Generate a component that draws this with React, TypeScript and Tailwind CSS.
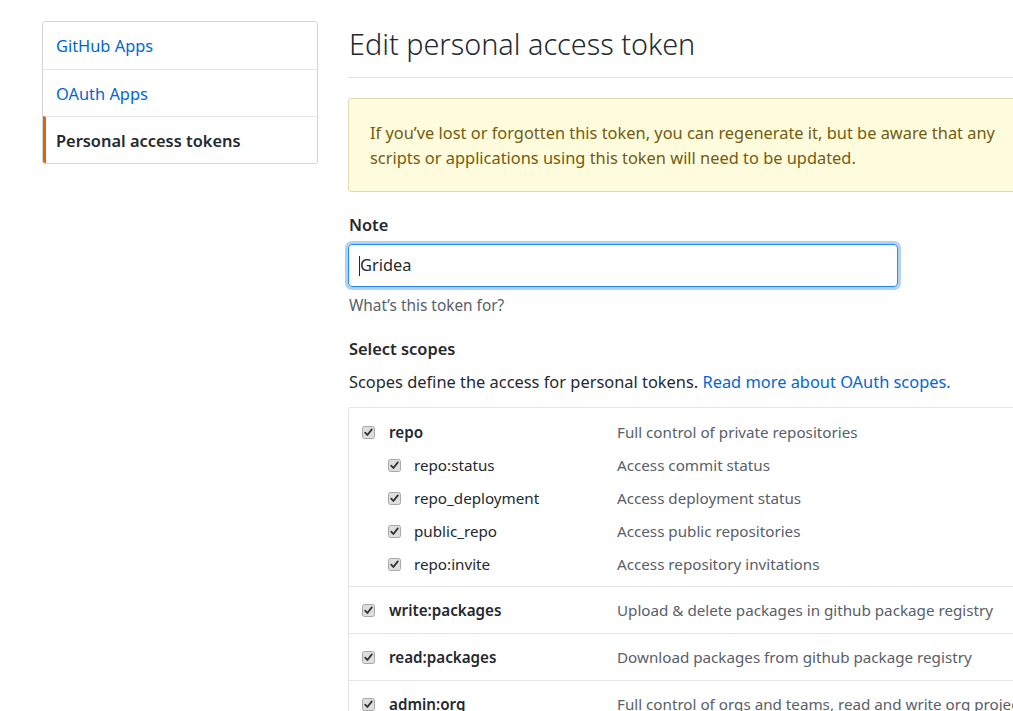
import React from 'react';

const FONT = { fontFamily: '"Noto Sans", "Open Sans", Arial, sans-serif' };

const NAV = [
    { label: 'GitHub Apps', active: false },
    { label: 'OAuth Apps', active: false },
    { label: 'Personal access tokens', active: true },
];

interface Scope {
    name: string;
    desc: string;
    children?: { name: string; desc: string }[];
}

const SCOPES: Scope[] = [
    {
        name: 'repo',
        desc: 'Full control of private repositories',
        children: [
            { name: 'repo:status', desc: 'Access commit status' },
            { name: 'repo_deployment', desc: 'Access deployment status' },
            { name: 'public_repo', desc: 'Access public repositories' },
            { name: 'repo:invite', desc: 'Access repository invitations' },
        ],
    },
    { name: 'write:packages', desc: 'Upload & delete packages in github package registry' },
    { name: 'read:packages', desc: 'Download packages from github package registry' },
    { name: 'admin:org', desc: 'Full control of orgs and teams, read and write org projects' },
];

const Check = () => (
    <svg width="13" height="13" viewBox="0 0 13 13" className="shrink-0">
        <rect x="0.5" y="0.5" width="12" height="12" rx="2" fill="#dedede" stroke="#a8a8a8" />
        <path d="M3.2 6.6 L5.4 9 L9.8 3.4" fill="none" stroke="#333" strokeWidth="1.8" strokeLinecap="round" strokeLinejoin="round" />
    </svg>
);

export default function App() {
    return (
        <div className="w-[1013px] h-[711px] overflow-hidden bg-white flex" style={FONT}>
            {/* Sidebar */}
            <div className="pl-[42px] pt-[21px] w-[348px] shrink-0">
                <nav className="w-[276px] border border-[#d1d5da] rounded-[3px] overflow-hidden">
                    {NAV.map((item, i) => (
                        <div
                            key={item.label}
                            className={`h-[47px] flex items-center pt-[2px] text-[16.4px] ${i > 0 ? 'border-t border-[#e1e4e8]' : ''} ${
                                item.active
                                    ? 'border-l-[3px] border-l-[#e36209] pl-[10px] text-[#24292e] font-semibold'
                                    : 'pl-[13px] text-[#0366d6]'
                            }`}
                        >
                            {item.label}
                        </div>
                    ))}
                </nav>
            </div>

            {/* Main */}
            <div className="w-[740px] shrink-0 pt-[24px]">
                <h2 className="text-[28.8px] font-light text-[#24292e] leading-[40px] pb-[13px] border-b border-[#e1e4e8] pl-px">
                    Edit personal access token
                </h2>

                <div className="mt-[20px] bg-[#fffbdd] border border-[#e0d8b0] rounded-[3px] px-[21px] py-[21px] text-[16.4px] leading-[25px] text-[#735c0f]">
                    If you’ve lost or forgotten this token, you can regenerate it, but be aware that any
                    <br />
                    scripts or applications using this token will need to be updated.
                </div>

                <div className="mt-[21px] pl-px">
                    <div className="text-[16.4px] font-semibold text-[#24292e] leading-[24px]">Note</div>
                    <div className="mt-[7px] w-[550px] h-[43px] -ml-px rounded-[4px] border border-[#2188ff] shadow-[0_0_0_3px_rgba(3,102,214,0.3)] flex items-center px-[10px] text-[16.4px] text-[#24292e]">
                        <span className="w-px h-[20px] bg-[#24292e]" />
                        Gridea
                    </div>
                    <div className="mt-[8px] text-[15.4px] text-[#586069] leading-[22px]">What’s this token for?</div>

                    <div className="mt-[20px] text-[16.4px] font-semibold text-[#24292e] leading-[24px]">Select scopes</div>
                    <div className="mt-[9px] text-[16.4px] text-[#24292e] leading-[24px]">
                        Scopes define the access for personal tokens.{' '}
                        <span className="text-[#0366d6]">Read more about OAuth scopes.</span>
                    </div>
                </div>

                <div className="mt-[13px] border border-[#e1e4e8] rounded-[3px] text-[15.2px]">
                    {SCOPES.map((s, i) => (
                        <div key={s.name} className={`${i > 0 ? 'border-t border-[#e1e4e8]' : ''} ${i === 0 ? 'pt-[12px] pb-[10px]' : 'py-[11px]'}`}>
                            <div className="flex items-center h-[24px] pl-[13px]">
                                <Check />
                                <span className="ml-[14px] w-[228px] font-semibold text-[#24292e]">{s.name}</span>
                                <span className="text-[#586069] whitespace-nowrap">{s.desc}</span>
                            </div>
                            {s.children?.map((c) => (
                                <div key={c.name} className="flex items-center h-[24px] mt-[9px] pl-[39px]">
                                    <Check />
                                    <span className="ml-[13px] w-[203px] text-[#24292e]">{c.name}</span>
                                    <span className="text-[#586069] whitespace-nowrap">{c.desc}</span>
                                </div>
                            ))}
                        </div>
                    ))}
                </div>
            </div>
        </div>
    );
}
